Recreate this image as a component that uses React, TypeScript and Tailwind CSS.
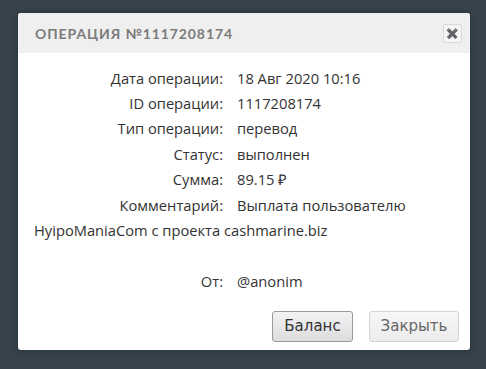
const rows: [string, string][] = [
  ["Дата операции:", "18 Авг 2020 10:16"],
  ["ID операции:", "1117208174"],
  ["Тип операции:", "перевод"],
  ["Статус:", "выполнен"],
  ["Сумма:", "89.15 ₽"],
  ["Комментарий:", "Выплата пользователю"],
];

export default function App() {
  return (
    <div className="h-[369px] w-[486px] bg-[#36434b] pt-[13px] pl-[18px]">
      <div className="w-[452px] overflow-hidden rounded-[3px] bg-white shadow-[0_0_6px_rgba(0,0,0,0.3)]">
        {/* header */}
        <div className="flex h-[40px] items-center justify-between bg-[#efefef] pl-[17px] pr-[8px]">
          <span className="font-['Lato',sans-serif] text-[14px] font-bold tracking-[0.9px] text-[#7b7b7b]">
            ОПЕРАЦИЯ №1117208174
          </span>
          <button className="flex h-[19px] w-[19px] items-center justify-center rounded-[2px] border border-[#d9d9d9] bg-[#f4f4f4] text-[10px] leading-none text-[#8a8a8a]">
            ✖
          </button>
        </div>

        {/* body */}
        <div className="px-[16px] pt-[12px] font-['Open_Sans',sans-serif] text-[14.7px] text-[#333]">
          {rows.map(([label, value]) => (
            <div key={label} className="flex h-[25.4px] items-center">
              <span className="w-[203px] shrink-0 pr-[14px] text-right">{label}</span>
              <span>{value}</span>
            </div>
          ))}
          {/* comment text wraps onto the next line */}
          <div className="flex h-[25.4px] items-center">HyipoManiaCom с проекта cashmarine.biz</div>
          <div className="h-[25.4px]" />
          <div className="flex h-[25.4px] items-center">
            <span className="w-[203px] shrink-0 pr-[14px] text-right">От:</span>
            <span>@anonim</span>
          </div>
        </div>

        {/* footer */}
        <div className="flex justify-end gap-[16px] pt-[17px] pr-[11px] pb-[8px] font-['DejaVu_Sans',sans-serif] text-[15px]">
          <button className="h-[31px] w-[81px] rounded-[3px] border border-[#9a9a9a] bg-gradient-to-b from-[#f3f3f3] to-[#dcdcdc] text-[#333]">
            Баланс
          </button>
          <button className="h-[31px] w-[90px] rounded-[3px] border border-[#d4d4d4] bg-gradient-to-b from-[#f7f7f7] to-[#ececec] text-[#666]">
            Закрыть
          </button>
        </div>
      </div>
    </div>
  );
}
